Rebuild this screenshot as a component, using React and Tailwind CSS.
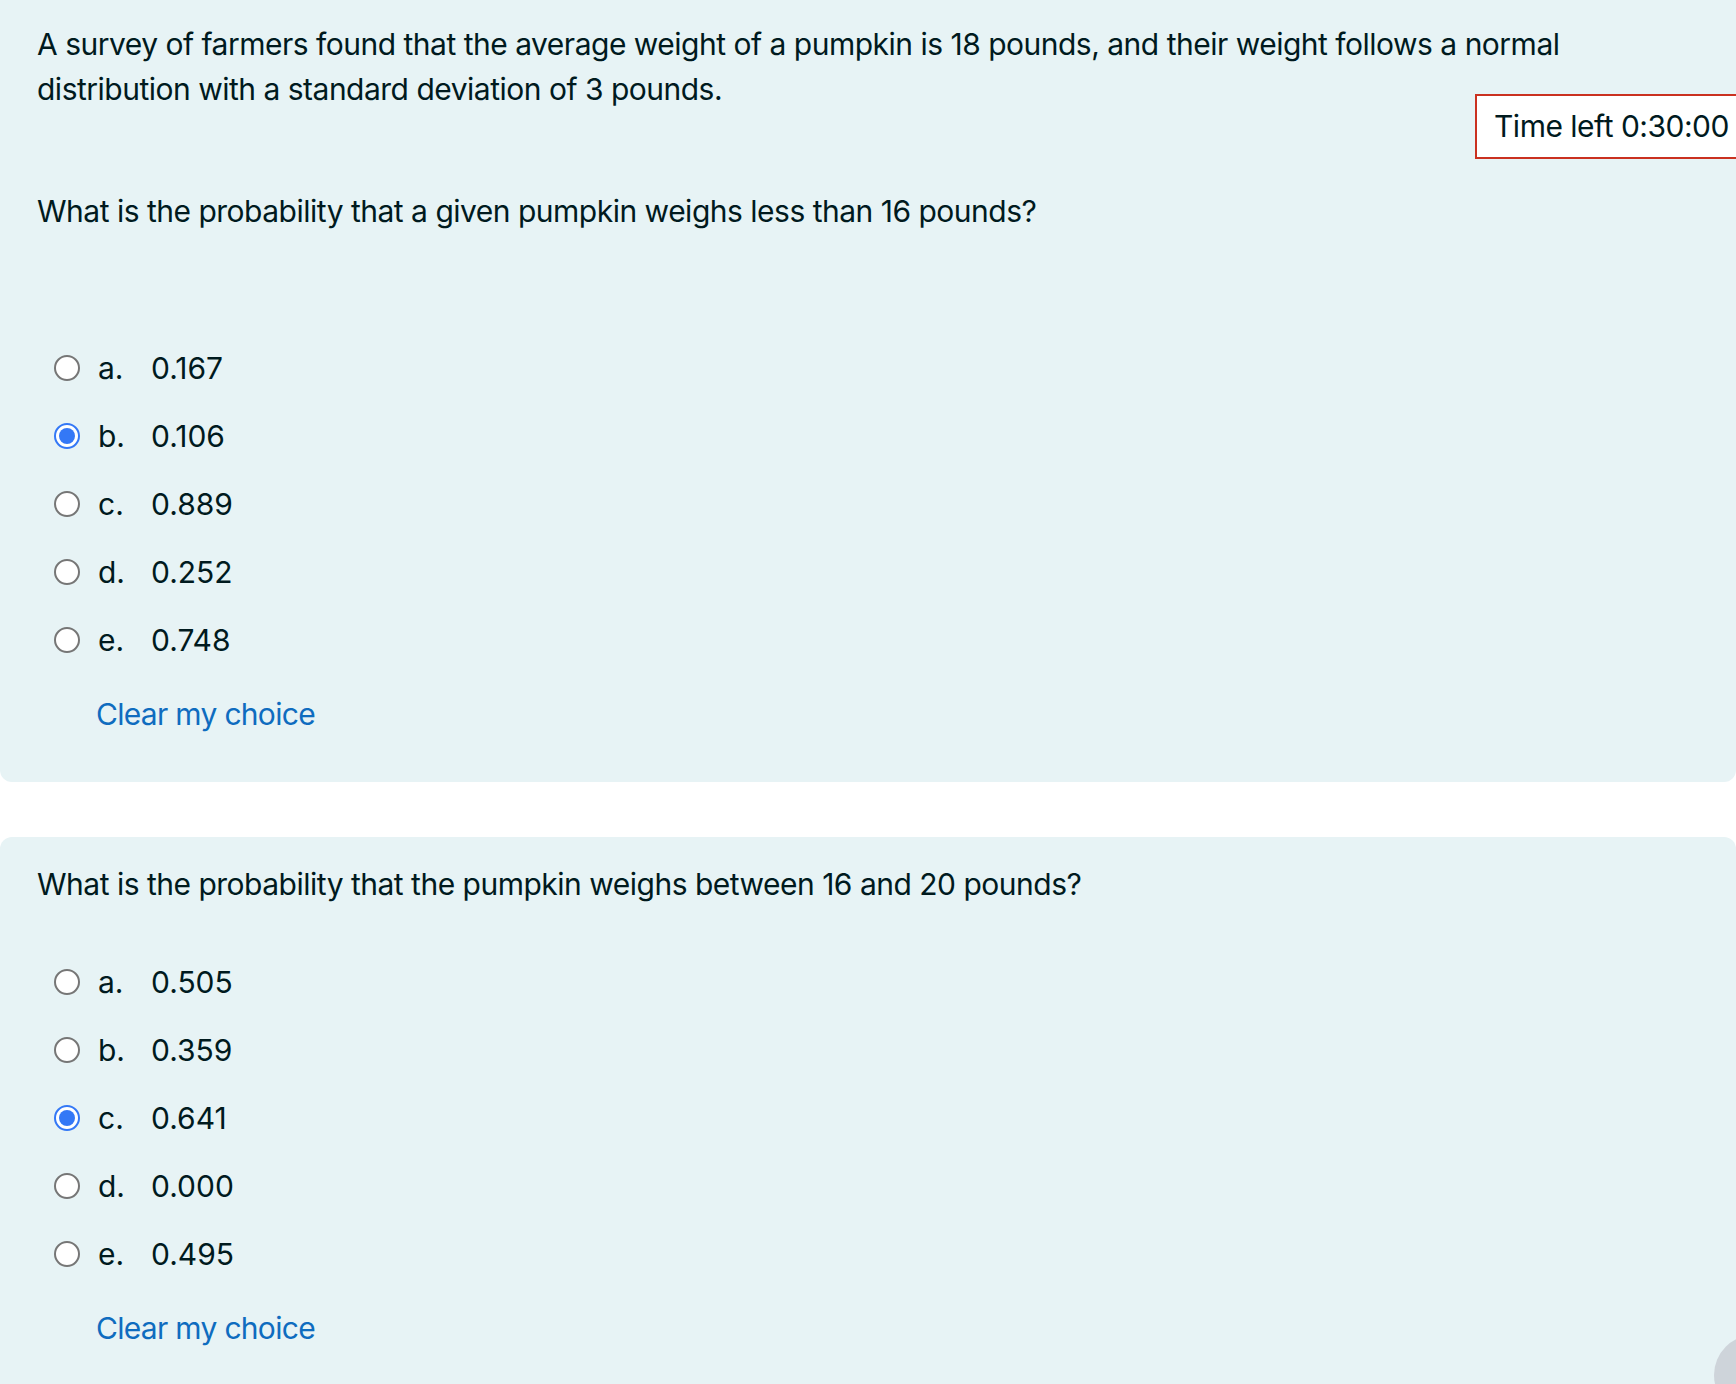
import React from "react";

const questions = [
  {
    id: 1,
    options: [
      { letter: "a.", value: "0.167" },
      { letter: "b.", value: "0.106", checked: true },
      { letter: "c.", value: "0.889" },
      { letter: "d.", value: "0.252" },
      { letter: "e.", value: "0.748" },
    ],
  },
  {
    id: 2,
    options: [
      { letter: "a.", value: "0.505" },
      { letter: "b.", value: "0.359" },
      { letter: "c.", value: "0.641", checked: true },
      { letter: "d.", value: "0.000" },
      { letter: "e.", value: "0.495" },
    ],
  },
];

function Radio({ checked }) {
  if (checked) {
    return (
      <span className="flex h-[26px] w-[26px] shrink-0 items-center justify-center rounded-full border-[2px] border-[#3478f6] bg-white">
        <span className="h-[16px] w-[16px] rounded-full bg-[#3478f6]"></span>
      </span>
    );
  }
  return <span className="h-[26px] w-[26px] shrink-0 rounded-full border-[2px] border-[#767676] bg-white"></span>;
}

function Options({ options }) {
  return (
    <div className="flex flex-col tracking-normal">
      {options.map((opt) => (
        <label key={opt.letter} className="flex h-[68px] items-center pl-[17px]">
          <Radio checked={opt.checked} />
          <span className="ml-[18px] w-[53px]">{opt.letter}</span>
          <span>{opt.value}</span>
        </label>
      ))}
    </div>
  );
}

function ClearChoice() {
  return (
    <a href="#" className="mt-[18px] ml-[59px] block tracking-[-0.7px] text-[#0f6cbf]">
      Clear my choice
    </a>
  );
}

export default function App() {
  return (
    <div
      className="relative h-[1384px] w-[1736px] overflow-hidden bg-white text-[30px] leading-[45px] tracking-[-0.5px] text-[#001a1e]"
      style={{ fontFamily: "Inter, 'Noto Sans', sans-serif" }}
    >
      {/* first question */}
      <div className="h-[782px] rounded-b-[12px] bg-[#e7f3f5] pl-[37px] pt-[22px]">
        <p className="w-[1620px]">
          A survey of farmers found that the average weight of a pumpkin is 18 pounds, and their weight follows a normal
          distribution with a standard deviation of 3 pounds.
        </p>
        <p className="mt-[77px]">What is the probability that a given pumpkin weighs less than 16 pounds?</p>
        <div className="mt-[100px]">
          <Options options={questions[0].options} />
        </div>
        <ClearChoice />
      </div>

      {/* second question */}
      <div className="mt-[55px] h-[600px] rounded-t-[12px] bg-[#e7f3f5] pl-[37px] pt-[25px]">
        <p>What is the probability that the pumpkin weighs between 16 and 20 pounds?</p>
        <div className="mt-[41px]">
          <Options options={questions[1].options} />
        </div>
        <ClearChoice />
      </div>

      {/* timer */}
      <div className="absolute left-[1475px] top-[94px] flex h-[65px] w-[300px] items-center border-[2px] border-[#ca3120] bg-white pl-[17px]">
        Time left 0:30:00
      </div>

      {/* corner button */}
      <div className="absolute left-[1714px] top-[1335px] h-[80px] w-[80px] rounded-full bg-[#ced4da]"></div>
    </div>
  );
}
